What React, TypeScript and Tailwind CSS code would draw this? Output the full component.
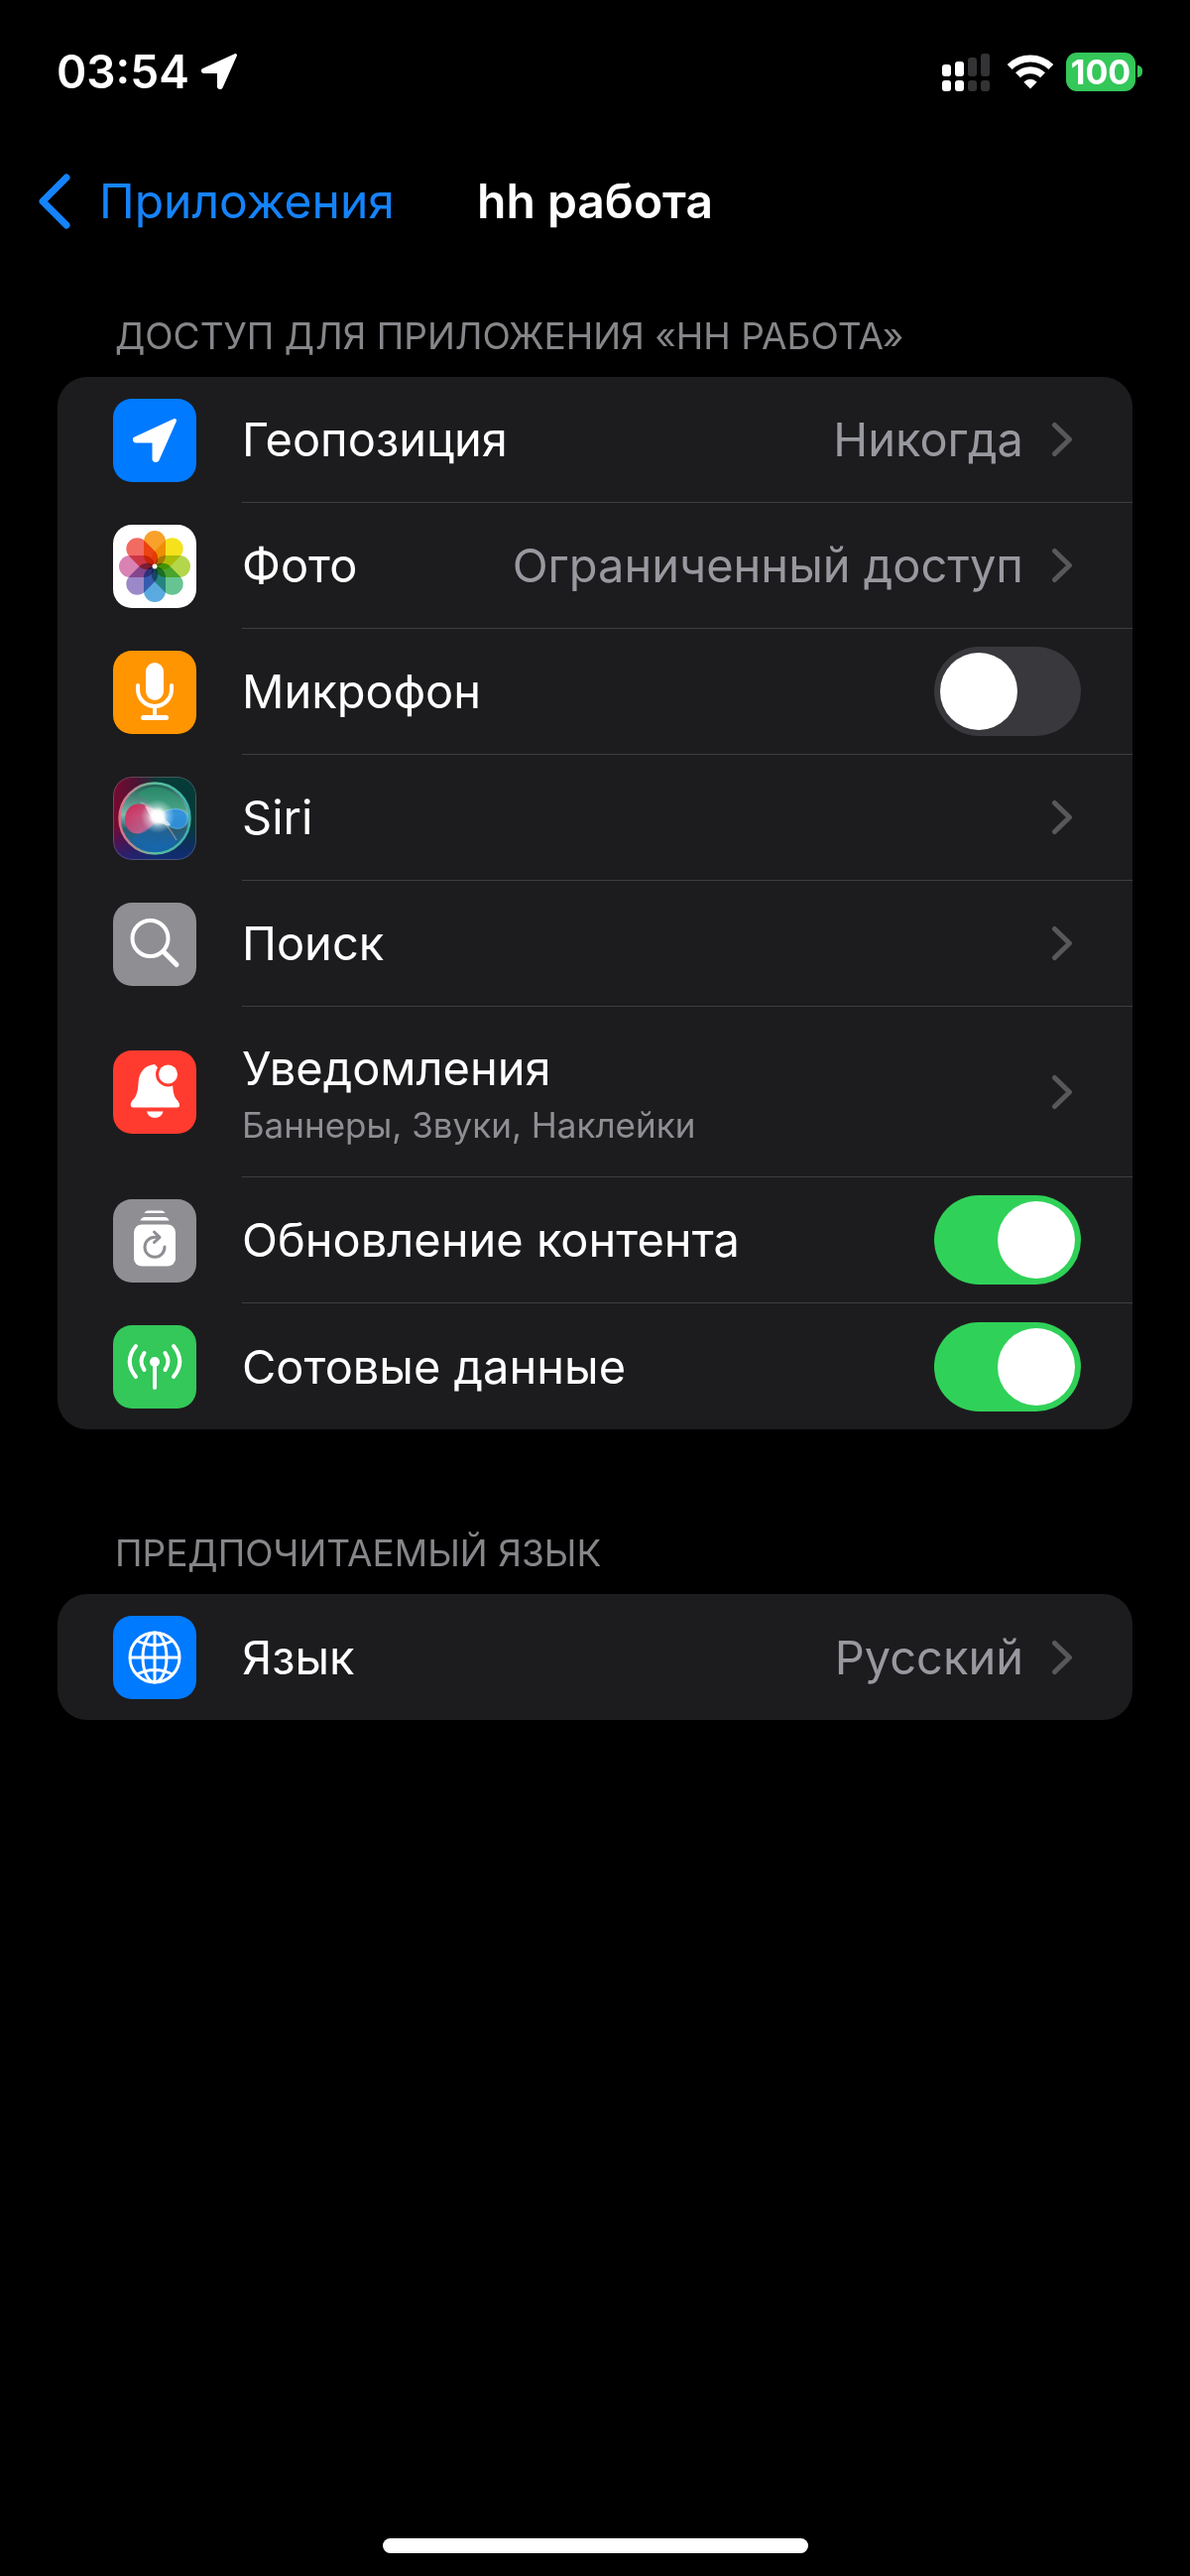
import React, { useId, useState } from "react";

function LocationArrow({ className }: { className: string }) {
  return (
    <svg viewBox="0 0 44 44" className={className} fill="#fff" stroke="#fff" strokeWidth="4" strokeLinejoin="round" aria-hidden="true">
      <path d="M42 2 L2 20.500 Q1.500 22.500 3.500 22.500 H21.500 V41 Q22.500 43 24.500 41.500 Z" />
    </svg>
  );
}

function SignalIcon() {
  return (
    <svg viewBox="0 0 49 40" className="h-10 w-[49px]" aria-hidden="true">
      <g fill="#fff">
        <rect x="0" y="13" width="9" height="12" rx="3" />
        <rect x="13" y="10" width="9" height="15" rx="3" />
        <rect x="0" y="29" width="9" height="11" rx="3" />
        <rect x="13" y="29" width="9" height="11" rx="3" />
      </g>
      <g fill="#333335">
        <rect x="26" y="6" width="9" height="19" rx="3" />
        <rect x="39" y="2" width="9" height="23" rx="3" />
        <rect x="26" y="29" width="9" height="11" rx="3" />
        <rect x="39" y="29" width="9" height="11" rx="3" />
      </g>
    </svg>
  );
}

function WifiIcon() {
  return (
    <svg viewBox="0 0 48 36" className="h-9 w-12" aria-hidden="true">
      <g fill="none" stroke="#fff" strokeWidth="7">
        <path d="M3.200 13.500 A29.500 29.500 0 0 1 44.800 13.500" />
        <path d="M11.500 21.800 A17.700 17.700 0 0 1 36.500 21.800" />
      </g>
      <path d="M24 35.500 L17.300 28.800 Q24 22.800 30.700 28.800 Z" fill="#fff" />
    </svg>
  );
}

function Chevron() {
  return (
    <svg viewBox="0 0 22 36" className="mr-2 h-9 w-[22px] shrink-0" fill="none" stroke="#58585b" strokeWidth="5" strokeLinecap="round" strokeLinejoin="round" aria-hidden="true">
      <path d="M3.500 3.500 L18.500 18 L3.500 32.500" />
    </svg>
  );
}

const glyph = "h-[84px] w-[84px] shrink-0 rounded-[19px]";

function LocationIcon() {
  return (
    <span className="flex h-[84px] w-[84px] shrink-0 items-center justify-center rounded-[19px] bg-[#007aff]">
      <LocationArrow className="h-11 w-11" />
    </span>
  );
}

const petals: [number, string][] = [
  [0, "#f8a12b"],
  [45, "#f5e21d"],
  [90, "#b4d64b"],
  [135, "#66c492"],
  [180, "#5aaae0"],
  [225, "#9a88c8"],
  [270, "#d982b4"],
  [315, "#f26a62"],
];

function PhotosIcon() {
  return (
    <svg viewBox="0 0 84 84" className={glyph + " bg-white"} aria-hidden="true">
      <g className="isolate">
        {petals.map(([angle, color]) => (
          <rect key={angle} x="31" y="6" width="22" height="36" rx="11" fill={color} transform={`rotate(${angle} 42 42)`} className="mix-blend-multiply" />
        ))}
      </g>
      <circle cx="42" cy="42" r="2.500" fill="#fff" />
    </svg>
  );
}

function MicIcon() {
  return (
    <svg viewBox="0 0 84 84" className={glyph + " bg-[#ff9500]"} aria-hidden="true">
      <rect x="33" y="12" width="18" height="38" rx="9" fill="#fff" />
      <g fill="none" stroke="#fff" strokeWidth="4" strokeLinecap="round">
        <path d="M25 35 V39 A17 17 0 0 0 59 39 V35" />
        <path d="M42 56 V67" />
        <path d="M30.500 67.500 H53.500" strokeWidth="5" />
      </g>
    </svg>
  );
}

function SiriIcon() {
  return (
    <svg viewBox="0 0 84 84" className={glyph} aria-hidden="true">
      <defs>
        <linearGradient id="siri-bg" x1="0" y1="0" x2="1" y2="0">
          <stop offset="0" stopColor="#780a30" />
          <stop offset="0.300" stopColor="#4a1434" />
          <stop offset="0.550" stopColor="#083c38" />
          <stop offset="1" stopColor="#053a38" />
        </linearGradient>
        <linearGradient id="siri-low" x1="0" y1="0" x2="0" y2="1">
          <stop offset="0.600" stopColor="#1a1a90" stopOpacity="0" />
          <stop offset="1" stopColor="#142a80" stopOpacity="0.850" />
        </linearGradient>
        <linearGradient id="siri-orb" x1="0" y1="0" x2="0" y2="1">
          <stop offset="0" stopColor="#1c5c50" />
          <stop offset="0.450" stopColor="#7cb8ac" />
          <stop offset="0.650" stopColor="#2c5c70" />
          <stop offset="1" stopColor="#1068b4" />
        </linearGradient>
        <linearGradient id="siri-ring" x1="0" y1="0" x2="1" y2="0">
          <stop offset="0" stopColor="#e0708c" />
          <stop offset="0.500" stopColor="#5cc09c" />
          <stop offset="1" stopColor="#3cb0b0" />
        </linearGradient>
        <linearGradient id="siri-pink" x1="0" y1="0" x2="1" y2="1">
          <stop offset="0" stopColor="#d81848" />
          <stop offset="1" stopColor="#c080b0" />
        </linearGradient>
        <radialGradient id="siri-glow">
          <stop offset="0" stopColor="#fff" />
          <stop offset="0.350" stopColor="#fff" stopOpacity="0.950" />
          <stop offset="0.600" stopColor="#eff" stopOpacity="0.400" />
          <stop offset="1" stopColor="#dff" stopOpacity="0" />
        </radialGradient>
      </defs>
      <rect width="84" height="84" fill="url(#siri-bg)" />
      <rect width="84" height="84" fill="url(#siri-low)" />
      <circle cx="42" cy="42" r="35.500" fill="url(#siri-orb)" stroke="url(#siri-ring)" strokeWidth="2.500" />
      <path d="M24 18 Q38 5 56 14 Q70 22 74 34 Q58 28 46 38 Q40 24 24 18 Z" fill="#2c9c72" opacity="0.600" />
      <path d="M46 40 C36 24 14 22 12 42 C12 62 34 64 46 40 Z" fill="url(#siri-pink)" opacity="0.900" />
      <path d="M46 40 C56 30 74 30 75 42 C74 56 58 56 46 40 Z" fill="#2d8fe0" stroke="#58b8ec" opacity="0.900" />
      <path d="M18 62 Q34 54 46 44 Q60 58 64 66 Q42 82 18 62 Z" fill="#1868b8" opacity="0.450" />
      <path d="M28 26 Q40 30 46 40 Q56 50 64 64" fill="none" stroke="#f4c4cc" strokeWidth="1.500" opacity="0.400" />
      <circle cx="45" cy="40" r="17" fill="url(#siri-glow)" />
      <path d="M32 29 Q44 33 56 46 Q62 52 48 47 Q38 44 32 29 Z" fill="#fff" opacity="0.600" />
      <rect x="0.500" y="0.500" width="83" height="83" rx="19" fill="none" stroke="#6e6e74" strokeOpacity="0.600" />
    </svg>
  );
}

function SearchIcon() {
  return (
    <svg viewBox="0 0 84 84" className={glyph + " bg-[#8e8e93]"} fill="none" stroke="#fff" strokeLinecap="round" aria-hidden="true">
      <circle cx="37.500" cy="36" r="18" strokeWidth="4" />
      <path d="M51 49.500 L64 62.500" strokeWidth="5" />
    </svg>
  );
}

function BellIcon() {
  return (
    <svg viewBox="0 0 84 84" className={glyph + " bg-[#ff3b30]"} aria-hidden="true">
      <path d="M42 14 C31 15 26 23 25.500 33 C25 43 23 47 19 51 Q17 54 18 56 Q18.500 57.500 20.500 57.500 H64.500 Q66.500 57.500 67 56 Q67.500 54 65.500 51 C61.500 47 60.500 43 60 33 Z" fill="#fff" />
      <circle cx="55.500" cy="24" r="12.500" fill="#ff3b30" />
      <circle cx="55.500" cy="24" r="9.500" fill="#fff" />
      <path d="M34 61.500 H50.500 Q49 68 42.300 68 Q35.500 68 34 61.500 Z" fill="#fff" />
    </svg>
  );
}

function RefreshIcon() {
  return (
    <svg viewBox="0 0 84 84" className={glyph + " bg-[#8e8e93]"} aria-hidden="true">
      <g fill="#fff">
        <path d="M31.500 14 Q32.500 11.500 35 11.500 H49 Q51.500 11.500 52.500 14 Z" />
        <path d="M27.500 21.500 Q28.500 18 32 18 H52 Q55.500 18 56.500 21.500 Z" />
        <rect x="21" y="25.500" width="42" height="42" rx="8" />
      </g>
      <g fill="none" stroke="#8e8e93" strokeWidth="3" strokeLinecap="round" strokeLinejoin="round">
        <path d="M46 38.300 H42 A10 10 0 1 0 52 48" />
        <path d="M41.500 33 L47 38.300 L41.500 43.500" />
      </g>
    </svg>
  );
}

function AntennaIcon() {
  return (
    <svg viewBox="0 0 84 84" className={glyph + " bg-[#34c759]"} aria-hidden="true">
      <circle cx="42" cy="37" r="5" fill="#fff" />
      <g fill="none" stroke="#fff" strokeWidth="4" strokeLinecap="round">
        <path d="M42 38 V63" />
        <path d="M31.500 28 Q25.500 36.500 31.500 45" />
        <path d="M52.500 28 Q58.500 36.500 52.500 45" />
        <path d="M23 21 Q10.500 36.500 23 52" />
        <path d="M61 21 Q73.500 36.500 61 52" />
      </g>
    </svg>
  );
}

function GlobeIcon() {
  return (
    <svg viewBox="0 0 84 84" className={glyph + " bg-[#007aff]"} fill="none" stroke="#fff" strokeWidth="3" aria-hidden="true">
      <circle cx="42" cy="42" r="25" />
      <ellipse cx="42" cy="42" rx="12" ry="25" />
      <path d="M42 17 V67 M17 42 H67 M24 25 Q42 34 60 25 M24 59 Q42 50 60 59" />
    </svg>
  );
}

const rowClass = "flex w-full items-center pl-[56px] text-left";
const bodyText = "text-[47px] leading-[58px]";

function RowBody({ last, tall, children }: { last?: boolean; tall?: boolean; children: React.ReactNode }) {
  const height = tall ? "min-h-[172px]" : "min-h-[127px]";
  const line = last ? "" : "border-b border-[#3e3e41]";
  return <span className={`ml-[46px] flex min-w-0 flex-1 items-center pr-[52px] ${height} ${line}`}>{children}</span>;
}

type LinkRowProps = { icon: React.ReactNode; label: string; value?: string; detail?: string; last?: boolean };

function LinkRow({ icon, label, value, detail, last }: LinkRowProps) {
  return (
    <li>
      <button type="button" className={rowClass}>
        {icon}
        <RowBody last={last} tall={Boolean(detail)}>
          <span className={detail ? "flex flex-1 flex-col pt-2" : "flex flex-1 flex-col"}>
            <span className={bodyText}>{label}</span>
            {detail && <span className="text-[35px] leading-[56px] text-[#8e8e93]">{detail}</span>}
          </span>
          {value && <span className={`${bodyText} mr-7 text-[#98989f]`}>{value}</span>}
          <Chevron />
        </RowBody>
      </button>
    </li>
  );
}

function SwitchRow({ icon, label, initial, last }: { icon: React.ReactNode; label: string; initial: boolean; last?: boolean }) {
  const id = useId();
  const [on, setOn] = useState(initial);
  return (
    <li className={rowClass}>
      {icon}
      <RowBody last={last}>
        <label htmlFor={id} className={`${bodyText} flex-1`}>
          {label}
        </label>
        <input
          id={id}
          type="checkbox"
          role="switch"
          checked={on}
          onChange={(e) => setOn(e.target.checked)}
          className="flex h-[90px] w-[148px] shrink-0 cursor-pointer appearance-none items-center rounded-full bg-[#39393d] px-1.5 before:h-[78px] before:w-[78px] before:rounded-full before:bg-white before:content-[''] checked:justify-end checked:bg-[#30d158]"
        />
      </RowBody>
    </li>
  );
}

function Section({ title, children }: { title: string; children: React.ReactNode }) {
  return (
    <section>
      <h2 className="px-[58px] text-[37px] leading-[46px] text-[#86868a]">{title}</h2>
      <ul className="mt-[18px] overflow-hidden rounded-[30px] bg-[#1c1c1e]">{children}</ul>
    </section>
  );
}

export default function App() {
  return (
    <div className="flex min-h-screen flex-col bg-black font-['Inter','Liberation_Sans',sans-serif] text-white">
      <header>
        <div className="flex items-center justify-between pt-11 pr-12 pl-[57px]">
          <div className="flex items-center gap-3">
            <time className="text-[46px] leading-[56px] font-semibold">03:54</time>
            <LocationArrow className="h-9 w-9" />
          </div>
          <div className="flex items-center">
            <SignalIcon />
            <span className="ml-4">
              <WifiIcon />
            </span>
            <span className="ml-3 flex h-[39px] w-[70px] items-center justify-center rounded-[11px] bg-[#34c759] text-[34px] leading-[39px] font-bold">100</span>
            <span className="ml-0.5 h-3 w-[5px] rounded-r-full bg-[#34c759]" />
          </div>
        </div>
        <nav className="grid grid-cols-[1fr_auto_1fr] items-center pt-[74px] pr-9 pl-9">
          <a href="#apps" className="flex items-center gap-7 text-[#1583fb]">
            <svg viewBox="0 0 36 58" className="h-[58px] w-9" fill="none" stroke="currentColor" strokeWidth="7" strokeLinecap="round" strokeLinejoin="round" aria-hidden="true">
              <path d="M31 5 L7 29 L31 53" />
            </svg>
            <span className="text-[48px] leading-[58px]">Приложения</span>
          </a>
          <h1 className="text-[48px] leading-[58px] font-semibold">hh работа</h1>
        </nav>
      </header>
      <main className="flex flex-1 flex-col gap-[102px] px-[58px] pt-[84px]">
        <Section title="ДОСТУП ДЛЯ ПРИЛОЖЕНИЯ «HH РАБОТА»">
          <LinkRow icon={<LocationIcon />} label="Геопозиция" value="Никогда" />
          <LinkRow icon={<PhotosIcon />} label="Фото" value="Ограниченный доступ" />
          <SwitchRow icon={<MicIcon />} label="Микрофон" initial={false} />
          <LinkRow icon={<SiriIcon />} label="Siri" />
          <LinkRow icon={<SearchIcon />} label="Поиск" />
          <LinkRow icon={<BellIcon />} label="Уведомления" detail="Баннеры, Звуки, Наклейки" />
          <SwitchRow icon={<RefreshIcon />} label="Обновление контента" initial={true} />
          <SwitchRow icon={<AntennaIcon />} label="Сотовые данные" initial={true} last />
        </Section>
        <Section title="ПРЕДПОЧИТАЕМЫЙ ЯЗЫК">
          <LinkRow icon={<GlobeIcon />} label="Язык" value="Русский" last />
        </Section>
      </main>
      <footer className="flex justify-center pb-[23px]">
        <div className="h-[15px] w-[429px] rounded-full bg-white" />
      </footer>
    </div>
  );
}
